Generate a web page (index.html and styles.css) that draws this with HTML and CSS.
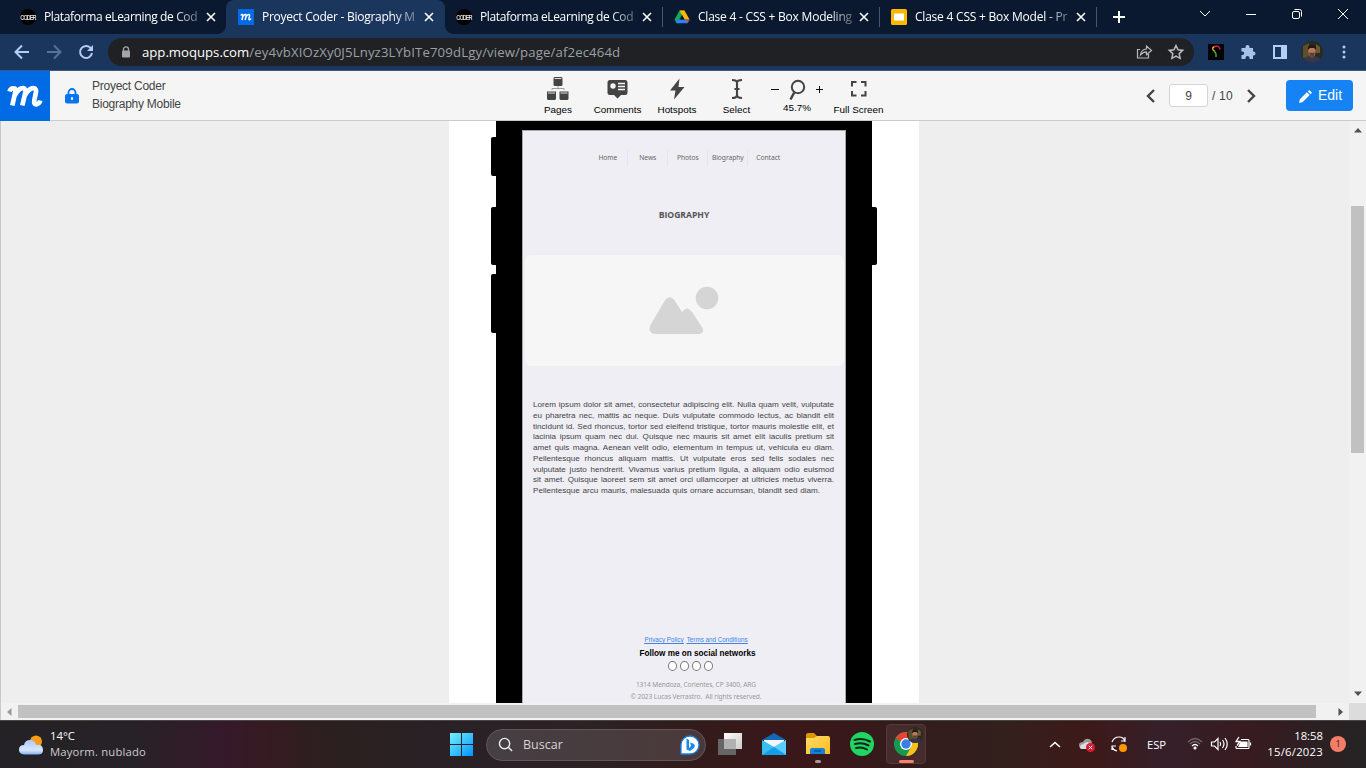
FILE: index.html
```html
<!DOCTYPE html>
<html lang="es">
<head>
<meta charset="utf-8">
<title>Proyect Coder - Biography Mobile</title>
<link rel="stylesheet" href="styles.css">
</head>
<body>
<svg class="defs" width="0" height="0" aria-hidden="true">
  <defs>
    <symbol id="close" viewBox="0 0 10 10"><path d="M1 1l8 8M9 1l-8 8" stroke="#fff" stroke-width="1.6"/></symbol>
    <symbol id="script-m" viewBox="0 0 50 50"><path d="M9.500 20.500Q10.500 16.500 14.500 17.500Q16 18 15.300 21L12.300 34.500M14.500 25Q18.500 17 23 17.200Q26.200 17.500 25.200 22L22.300 34.500M24.500 25Q29 17 33.500 17.200Q36.800 17.500 35.800 22L34.300 29.500Q33.500 34 37 33.200Q39.500 32.500 40.300 29.500" fill="none" stroke="#fff" stroke-width="4.700" stroke-linejoin="round"/></symbol>
    <linearGradient id="sky" x1="0" y1="0" x2="1" y2="1"><stop stop-color="#75f0ff"/><stop offset="1" stop-color="#0095ff"/></linearGradient>
    <linearGradient id="cloud" x1="0" y1="0" x2="0" y2="1"><stop stop-color="#a9ccff"/><stop offset=".7" stop-color="#d8e7ff"/><stop offset="1" stop-color="#7fb1f0"/></linearGradient>
    <linearGradient id="pane" x1="0" y1="0" x2="1" y2="1"><stop stop-color="#fff"/><stop offset="1" stop-color="#ccc"/></linearGradient>
    <linearGradient id="folder" x1="0" y1="0" x2="1" y2="1"><stop stop-color="#ffda68"/><stop offset="1" stop-color="#fcbd20"/></linearGradient>
    <symbol id="portrait" viewBox="0 0 22 22"><circle cx="11" cy="11" r="11" fill="#292b20"/><path d="M2 5L8 2V17H2Z" fill="#5b4d2d"/><path d="M15 3l4 3v6h-4Z" fill="#6c5933"/><path d="M3 18Q7 14 12 16Q17 14 19 18Q16 22 11 22Q6 22 3 18" fill="#34384c"/><path d="M7 8Q11 3 15 8L14 14Q11 19 8 14Z" fill="#b77b5b"/><path d="M7 9Q6 4 11 4Q16 4 15 9L13 7H9Z" fill="#241a15"/><path d="M8 12Q11 11 14 12L13 15Q11 18 9 15Z" fill="#63402f"/></symbol>
  </defs>
</svg>

<header class="tabs">
  <div class="tab tab-1"><span class="coder"><b>CODER</b></span><span class="tab-title">Plataforma eLearning de Cod</span><svg class="x"><use href="#close"/></svg></div>
  <div class="tab tab-2 active"><svg class="fav" viewBox="0 0 50 50"><rect width="50" height="50" fill="#006be5"/><use href="#script-m"/></svg><span class="tab-title biography">Proyect Coder - Biography M</span><svg class="x"><use href="#close"/></svg></div>
  <div class="tab tab-3"><span class="coder"><b>CODER</b></span><span class="tab-title">Plataforma eLearning de Cod</span><svg class="x"><use href="#close"/></svg></div>
  <div class="tab tab-4"><svg class="fav" viewBox="0 0 16 16"><path d="M5.500 1.500h5L5 14 2.500 14.200 0.500 10.500Z" fill="#14a45a"/><path d="M5.500 1.500h5l5 9-5 .3Z" fill="#ffba00"/><path d="M3 10.500h12.500l-2 3.700h-11Z" fill="#2684fc"/><path d="M12 10.500h3.500l-2 3.700Z" fill="#ea4335"/><path d="M8 6l2.700 4.600H5.300Z" fill="#0a1930"/></svg><span class="tab-title drive">Clase 4 - CSS + Box Modeling</span><svg class="x"><use href="#close"/></svg></div>
  <div class="tab tab-5"><svg class="fav" viewBox="0 0 16 16"><rect y="0" width="16" height="16" rx="1.500" fill="#fbb800"/><rect x="3" y="4.500" width="10" height="7" fill="#fff"/></svg><span class="tab-title slides">Clase 4 CSS + Box Model - Pr</span><svg class="x"><use href="#close"/></svg></div>
  <svg class="new-tab" viewBox="0 0 12 12"><path d="M6 0v12M0 6h12" stroke="#fff" stroke-width="2"/></svg>
  <div class="window-buttons">
    <svg viewBox="0 0 12 12"><path d="M1 3l5 5 5-5"/></svg>
    <svg viewBox="0 0 12 12"><path d="M1 6.500h10"/></svg>
    <svg viewBox="0 0 12 12"><rect x="1.500" y="3.500" width="7" height="7" rx="1.500"/><path d="M3.500 1.500h5q2 0 2 2v5"/></svg>
    <svg viewBox="0 0 12 12"><path d="M1 1l10 10M11 1L1 11"/></svg>
  </div>
</header>

<nav class="address-row">
  <svg class="nav-icons" viewBox="0 0 108 36" fill="none" stroke-width="2"><path d="M29 18H16M22 11.500L15.500 18l6.500 6.500" stroke="#b4cdf2"/><path d="M47 18h13M54 11.500l6.500 6.500-6.500 6.500" stroke="#587196"/><path d="M91 14.500A6 6 0 1 0 92 19" stroke="#b4cdf2"/><path d="M93 11v6h-6Z" fill="#b4cdf2"/></svg>
  <div class="address">
    <svg class="tiny-lock" viewBox="0 0 10 12"><path d="M2.500 5V3.300a2.500 2.500 0 0 1 5 0V5" fill="none" stroke="#a2a5a9" stroke-width="1.300"/><rect x="1" y="4.500" width="8" height="7" rx="1" fill="#a2a5a9"/></svg>
    <span class="url"><b>app.moqups.com</b>/ey4vbXIOzXy0J5Lnyz3LYbITe709dLgy/view/page/af2ec464d</span>
    <svg class="address-icons" viewBox="0 0 50 20" fill="none" stroke="#b8babd" stroke-width="1.200"><path d="M4 7.500H1.500V16h11v-4M4.500 13Q5 7.500 10.500 7V4l5 4.500-5 4.300v-3Q7 9.800 4.500 13Z"/><path d="M40 3.500l2 4.300 4.700.6-3.500 3.200.9 4.700L40 14l-4.100 2.300.9-4.700-3.500-3.200 4.700-.6Z" stroke-width="1.500"/></svg>
  </div>
  <div class="extensions">
    <svg viewBox="0 0 16 16"><rect width="16" height="16"/><path d="M7 7.500Q2.500 4.500 6.500 2.500" fill="none" stroke="#f7af22" stroke-width="1.400"/><path d="M6.500 2.500Q11 0.500 12 5.500" fill="none" stroke="#e5186f" stroke-width="1.400"/><path d="M6 7Q8.500 9 8 13" fill="none" stroke="#48b72f" stroke-width="1.400"/></svg>
    <svg viewBox="0 0 16 16"><path d="M2 4h3.500V3a2 2 0 0 1 4 0v1H13v3.500h.5a2 2 0 0 1 0 4H13V15H9.500v-1a2 2 0 0 0-4 0v1H1.500v-4h1a1.700 1.700 0 0 0 0-3.500h-1V4Z" fill="#aac2e7"/></svg>
    <svg viewBox="0 0 16 16"><path d="M2 2h12v12H2Z" fill="none" stroke="#b4cdf2" stroke-width="2"/><path d="M9 2h5v12H9Z" fill="#b4cdf2"/></svg>
    <svg class="avatar"><use href="#portrait"/></svg>
    <svg class="dots" viewBox="0 0 4 14" fill="#b4cdf2"><circle cx="2" cy="2" r="1.500"/><circle cx="2" cy="7" r="1.500"/><circle cx="2" cy="12" r="1.500"/></svg>
  </div>
</nav>

<section class="app-bar">
  <svg class="brand" viewBox="0 0 50 50"><rect width="50" height="50" fill="#006be5"/><use href="#script-m"/></svg>
  <svg class="project-lock" viewBox="0 0 14 16"><path d="M3.500 7V4.500a3.500 3.500 0 0 1 7 0V7" fill="none" stroke="#0875ef" stroke-width="1.800"/><rect y="6" width="14" height="9.500" rx="2" fill="#0875ef"/><rect x="6" y="9" width="2" height="3" rx="1" fill="#fff"/></svg>
  <div class="project"><span>Proyect Coder</span><span>Biography Mobile</span></div>
  <div class="tools">
    <div class="tool w60"><svg viewBox="0 0 24 24" fill="#444"><path d="M7.500 1.500Q7.500 0 8.500 0h7q1 0 1 1.500V7.500q0 1.500-1.500 1.500h-6Q7.500 9 7.500 7.500ZM1 14.500h9v7q0 1.500-1.500 1.500h-6Q1 23 1 21.500ZM13.500 14.500h9v7q0 1.500-1.500 1.500h-6Q13.500 23 13.500 21.500Z"/><path d="M8.500 1.500h7M2 16h7M14.500 16h7" stroke="#ddd"/><path d="M12 9v2.500M6 13v-1.500h12V13" stroke="#888" stroke-width=".8" fill="none"/></svg><span>Pages</span></div>
    <div class="tool w59"><svg viewBox="0 0 24 24"><path d="M4 3h15q2.500 0 2.500 2.500v10Q21.500 18 19 18h-4l-3.500 3.500L8 18H4q-2.500 0-2.500-2.500v-10Q1.500 3 4 3Z" fill="#444"/><circle cx="7" cy="9" r="2.700" fill="#f5f5f5"/><path d="M12 6.500h7M12 9.500h7M12 12.500h7" stroke="#f5f5f5" stroke-width="1.300"/></svg><span>Comments</span></div>
    <div class="tool w60"><svg viewBox="0 0 24 24"><path d="M14.500 1.500L5 13.500h5.500L9 22.500l10.500-12.500h-6Z" fill="#444"/></svg><span>Hotspots</span></div>
    <div class="tool w59"><svg viewBox="0 0 24 24"><path d="M7 3q5 0 5 3q0-3 5-3M12 6v12M7 21q5 0 5-3q0 3 5 3M9.500 12h5" fill="none" stroke="#444" stroke-width="2.100"/></svg><span>Select</span></div>
    <div class="tool zoom-tool"><div class="zoom-icons"><i></i><svg viewBox="0 0 24 24"><circle cx="13" cy="10" r="6.200" fill="none" stroke="#444" stroke-width="2"/><path d="M9.500 15l-4 7.500" stroke="#444" stroke-width="2.500"/></svg><svg class="plus" viewBox="0 0 8 8"><path d="M4.500 1v7M1 4.500h7" stroke="#111"/></svg></div><span>45.7%</span></div>
    <div class="tool w61"><svg viewBox="0 0 24 24"><path d="M9.500 5H5v4.500M14 5h4.500v4.500M5 14v4.500h4.500M14 18.500h4.500V14" fill="none" stroke="#444" stroke-width="2"/></svg><span>Full Screen</span></div>
  </div>
  <div class="pager"><svg viewBox="0 0 10 16"><path d="M8 2L2 8l6 6"/></svg><span class="page-number">9</span><span class="total">/ 10</span><svg viewBox="0 0 10 16"><path d="M2 2l6 6-6 6"/></svg></div>
  <button class="edit"><svg viewBox="0 0 14 14"><path d="M0 14l1-4L8.500 2.500l3 3L4 13ZM9.500 1.500L11 0l3 3-1.500 1.500Z" fill="#fff"/></svg>Edit</button>
</section>

<main class="workspace">
  <div class="canvas">
    <div class="paper">
      <div class="phone">
        <i class="key k1"></i><i class="key k2"></i><i class="key k3"></i><i class="key k4"></i>
        <article class="screen">
          <nav class="site-menu"><span>Home</span><span>News</span><span>Photos</span><span>Biography</span><span>Contact</span></nav>
          <h1>BIOGRAPHY</h1>
          <div class="picture"><svg viewBox="0 0 70 48"><path d="M1.500 38L15 15Q20 6 26 14L33 25Q38 18 43 25L53.500 41Q56 46 50 47H6Q-2 46 1.500 38Z" fill="#d5d5d5"/><circle cx="58" cy="11" r="11.300" fill="#d5d5d5"/></svg></div>
          <p class="bio">
            <span>Lorem ipsum dolor sit amet, consectetur adipiscing elit. Nulla quam velit, vulputate</span>
            <span>eu pharetra nec, mattis ac neque. Duis vulputate commodo lectus, ac blandit elit</span>
            <span>tincidunt id. Sed rhoncus, tortor sed eleifend tristique, tortor mauris molestie elit, et</span>
            <span>lacinia ipsum quam nec dui. Quisque nec mauris sit amet elit iaculis pretium sit</span>
            <span>amet quis magna. Aenean velit odio, elementum in tempus ut, vehicula eu diam.</span>
            <span>Pellentesque rhoncus aliquam mattis. Ut vulputate eros sed felis sodales nec</span>
            <span>vulputate justo hendrerit. Vivamus varius pretium ligula, a aliquam odio euismod</span>
            <span>sit amet. Quisque laoreet sem sit amet orci ullamcorper at ultricies metus viverra.</span>
            <span class="last">Pellentesque arcu mauris, malesuada quis ornare accumsan, blandit sed diam.</span>
          </p>
          <footer>
            <div class="links"><a>Privacy Policy</a><a>Terms and Conditions</a></div>
            <strong>Follow me on social networks</strong>
            <div class="social"><i></i><i></i><i></i><i></i></div>
            <div class="legal first">1314 Mendoza, Corientes, CP 3400, ARG</div>
            <div class="legal">© 2023 Lucas Verrastro.&nbsp; All rights reserved.</div>
          </footer>
        </article>
      </div>
    </div>
  </div>
  <div class="vbar"><svg viewBox="0 0 8 5"><path d="M0 4.500L4 0l4 4.500Z"/></svg><i></i><svg viewBox="0 0 8 5"><path d="M0 .5L4 5 8 .5Z"/></svg></div>
  <div class="hbar"><svg viewBox="0 0 5 8"><path d="M4.500 0L0 4l4.500 4Z" fill="#999"/></svg><i></i><svg viewBox="0 0 5 8"><path d="M.5 0L5 4 .5 8Z"/></svg></div>
  <div class="corner"></div>
</main>

<footer class="taskbar">
  <svg class="weather" viewBox="0 0 24 20"><circle cx="17" cy="6.500" r="6" fill="#f89c19"/><path d="M5 19.500Q0 19 0 14.500 0 10 5 10 6 5 11 5 16 5 17 10q7-1 7 5 0 4.500-5 4.500Z" fill="url(#cloud)"/></svg>
  <div class="forecast"><span>14°C</span><span>Mayorm. nublado</span></div>
  <svg class="start" viewBox="0 0 23 23" fill="url(#sky)"><path d="M0 0H11V11H0ZM12 0H23V11H12ZM0 12H11V23H0ZM12 12H23V23H12Z"/></svg>
  <div class="search"><svg viewBox="0 0 16 16" fill="none" stroke="#eee" stroke-width="1.500"><circle cx="7" cy="7" r="5.500"/><path d="M11 11l4 4"/></svg><span>Buscar</span><svg class="bing" viewBox="0 0 20 20"><path d="M1 19V10a9 9 0 1 1 9 9Z" fill="#fff" stroke="#1684ee" stroke-width="1.300"/><path d="M6.500 3.500v11l3.500 1.500 4-3q2-3-1-4.500l-3-1 1 3.500-2 2V5Z" fill="#198aec"/></svg></div>
  <div class="apps">
    <div><svg viewBox="0 0 24 24"><rect x="6" y="1" width="18" height="16" fill="url(#pane)"/><rect y="7" width="18" height="16" fill="#666"/><path d="M6 7h12v10H6Z" fill="#b2b1b1"/></svg></div>
    <div><svg viewBox="0 0 24 24"><path d="M0 8L12 1l12 7Z" fill="#1467b5"/><path d="M2 8h20v12H2Z" fill="#f3f5f8"/><path d="M0 8l12 7 12-7v15H0Z" fill="#36bdf3"/><path d="M12 15l12-7v15Z" fill="#59ceff"/><path d="M0 23l12-8 12 8Z" fill="#159ee8"/></svg></div>
    <div class="running"><svg viewBox="0 0 24 24"><path d="M0 3q0-2 2-2h6l3 3h11v5H0Z" fill="#dc9700"/><path d="M0 6h8l3-2h11q2 0 2 2v16H0Z" fill="url(#folder)"/><path d="M4 22v-4q0-2 2-2h11q2 0 2 2v4Z" fill="#1682d4"/><path d="M8 18h7v2H8Z" fill="#0762b1"/></svg></div>
    <div><svg viewBox="0 0 24 24"><circle cx="12" cy="12" r="12" fill="#1ed760"/><path d="M4.500 8q8-2.500 15.500 1.500M5 12q7-2 13.500 1.500M6 16q6-1.500 11 1.500" fill="none" stroke="#142219" stroke-width="2" stroke-linecap="round"/></svg></div>
    <div class="chrome"><svg viewBox="0 0 24 24"><circle cx="12" cy="12" r="12" fill="#159a50"/><path d="M1.600 6A12 12 0 0 1 22.400 6L12 12Z" fill="#ea4335"/><path d="M22.400 6H12l5.200 9L12 24A12 12 0 0 0 22.400 6Z" fill="#fbc116"/><circle cx="12" cy="12" r="6" fill="#fff"/><circle cx="12" cy="12" r="4.700" fill="#397ee9"/></svg><svg class="chrome-avatar"><use href="#portrait"/></svg></div>
  </div>
  <svg class="up" viewBox="0 0 12 8"><path d="M1 6l5-4.500L11 6" fill="none" stroke="#fff" stroke-width="1.600"/></svg>
  <svg class="sync-error" viewBox="0 0 16 14"><path d="M3 11Q0 10 0 7t4-3q2-4 6-3 3 1 3 5v5Z" fill="#999"/><path d="M2 11Q0 9 2 7L8 4Q13 5 13 9L8 11Z" fill="#ddd"/><circle cx="11.500" cy="9.500" r="4.500" fill="#d61c33"/><path d="M9.800 7.800l3.400 3.400M13.200 7.800l-3.400 3.400" stroke="#fff"/></svg>
  <svg class="refresh" viewBox="0 0 16 16"><path d="M1 6q2-5 7-5t6 5M10 5h4V1M1 14v-4h4M1 11q1 3 5 4" fill="none" stroke="#fff" stroke-width="1.200"/><circle cx="12" cy="12" r="4" fill="#ff9800"/></svg>
  <span class="lang">ESP</span>
  <svg class="status" viewBox="0 0 64 18" fill="none" stroke="#fff" stroke-width="1.200"><path d="M1 7q7-7 14 0M3 9q5-5 10 0" stroke="#74676b"/><path d="M5 11q3-3 6 0"/><circle cx="8" cy="13" r="1" fill="#fff"/><path d="M24.500 7h3l3.500-3.500v11L27.500 11h-3ZM33 7q1.500 2 0 4M35.500 5q3 4 0 8M38 3q4.500 6 0 12M54 4.500h7q1 0 1 1v7q0 1-1 1H50q-1 0-1-1V11M63.500 7.500v3"/><path d="M54 7h6v4.500h-8Z" fill="#fff"/><path d="M52 2l-3 4.500h4l-3 4" stroke-width="1.300"/></svg>
  <div class="clock"><span>18:58</span><span class="date">15/6/2023</span></div>
  <span class="badge">1</span>
</footer>
</body>
</html>
```
FILE: styles.css
```css
* { box-sizing: border-box; }
body { margin: 0; width: 1366px; height: 768px; overflow: hidden; display: flex; flex-direction: column; font-family: "Liberation Sans", sans-serif; background: #eee; }
svg { display: block; flex: none; overflow: visible; }
.defs { position: absolute; }

.tabs { height: 34px; flex: none; display: flex; align-items: center; background: #0a1930; color: #fff; font: 12px "Open Sans", sans-serif; }
.tab { display: flex; align-items: center; height: 34px; position: relative; }
.tab-1 { width: 226px; padding-left: 20px; }
.tab-2 { width: 219px; padding-left: 12px; }
.tab-3 { width: 218px; padding-left: 11px; border-right: 1px solid #48566c; }
.tab-4 { width: 217px; padding-left: 11px; border-right: 1px solid #48566c; }
.tab-5 { width: 217px; padding-left: 11px; border-right: 1px solid #48566c; }
.tab-3, .tab-4, .tab-5 { height: 20px; }
.active { background: #1b365d; border-radius: 8px 8px 0 0; }
.active::before, .active::after { content: ""; position: absolute; bottom: 0; width: 8px; height: 8px; }
.active::before { left: -8px; background: radial-gradient(circle at 0 0, transparent 7.5px, #1b365d 8px); }
.active::after { right: -8px; background: radial-gradient(circle at 100% 0, transparent 7.5px, #1b365d 8px); }
.fav, .coder { width: 16px; height: 16px; flex: none; }
.coder { background: #000; border-radius: 50%; display: flex; align-items: center; justify-content: center; }
.coder b { font: bold 5.5px "Liberation Sans", sans-serif; letter-spacing: -0.9px; transform: scaleY(1.4); color: #ddd; }
.tab-title { width: 155px; margin-left: 8px; margin-right: -1px; white-space: nowrap; line-height: 18px; letter-spacing: -0.36px; -webkit-mask-image: linear-gradient(90deg, #000 84%, rgba(0,0,0,.3) 100%); mask-image: linear-gradient(90deg, #000 84%, rgba(0,0,0,.3) 100%); }
.biography { letter-spacing: -0.26px; }
.drive { letter-spacing: -0.22px; }
.slides { letter-spacing: -0.22px; }
.x { width: 10px; height: 10px; margin-left: 8px; }
.tab-4 .x, .tab-5 .x { margin-left: 7px; }
.new-tab { width: 12px; height: 12px; margin-left: 16px; }
.window-buttons { display: flex; gap: 34px; margin: -6px 17px 0 auto; }
.window-buttons svg { width: 12px; height: 12px; fill: none; stroke: #fff; stroke-width: 1; }

.address-row { height: 37px; flex: none; background: #1b365d; border-bottom: 1px solid #405880; display: flex; align-items: center; }
.nav-icons { width: 108px; height: 36px; }
.address { height: 28px; width: 1086px; border-radius: 14px; background: #202124; display: flex; align-items: center; padding: 0 11px 0 13px; }
.tiny-lock { width: 10px; height: 12px; }
.url { font: 13.2px/20px "Open Sans", sans-serif; color: #9aa0a6; margin-left: 11px; letter-spacing: 0.12px; white-space: nowrap; }
.url b { font-weight: 400; color: #fff; letter-spacing: -0.02px; }
.address-icons { width: 50px; height: 20px; margin-left: auto; margin-right: -3px; }
.extensions { margin-left: 14px; display: flex; align-items: center; gap: 16px; }
.extensions svg { width: 16px; height: 16px; }
.extensions .avatar { width: 22px; height: 22px; margin-left: -3px; }
.extensions .dots { width: 4px; height: 14px; margin-left: 3px; }

.app-bar { height: 50px; flex: none; background: #f5f5f5; border-bottom: 1px solid #ccc; display: flex; align-items: flex-start; position: relative; z-index: 2; }
.brand { width: 50px; height: 50px; }
.project-lock { width: 14px; height: 16px; margin: 17px 0 0 15px; }
.project { margin: 6px 0 0 13px; width: 436px; display: flex; flex-direction: column; font-size: 12px; line-height: 18px; color: #444; letter-spacing: -0.25px; }
.tools { display: flex; }
.tool { display: flex; flex-direction: column; align-items: center; height: 49px; padding-top: 6px; font-size: 9.9px; line-height: 11px; color: #000; white-space: nowrap; }
.tool svg { width: 24px; height: 24px; }
.tool > span { margin-top: 3px; }
.w60 { width: 60px; } .w59 { width: 59px; } .w61 { width: 61px; }
.zoom-tool { width: 62px; }
.zoom-tool > span { margin-top: 1px; }
.zoom-icons { display: flex; align-items: center; gap: 6px; }
.zoom-icons i { width: 8px; height: 1px; background: #111; }
.tool .plus { width: 8px; height: 8px; }
.pager { display: flex; align-items: center; margin: 13px 0 0 257px; height: 23px; color: #444; font-size: 12px; }
.pager svg { width: 10px; height: 16px; fill: none; stroke: #444; stroke-width: 2.4; }
.page-number { width: 39px; height: 23px; border: 1px solid #d5d5d5; border-radius: 3px; background: #fff; text-align: center; line-height: 22px; margin-left: 13px; }
.total { width: 38px; padding-left: 4px; white-space: nowrap; letter-spacing: 0.2px; }
.edit { border: 0; margin: 9px 13px 0 auto; width: 67px; height: 31px; border-radius: 4px; background: #1683f5; color: #fff; font: 14px "Liberation Sans", sans-serif; display: flex; align-items: center; padding: 0 0 1px 13px; gap: 6px; }
.edit svg { width: 13px; height: 13px; margin-top: 2px; }

.workspace { height: 599px; flex: none; display: grid; grid-template: 582px 17px / 1349px 17px; }
.canvas { overflow: hidden; background: #eee; border-left: 1px solid #c8c8c8; }
.paper { width: 469.5px; height: 582px; margin-left: 448px; background: #fff; padding-left: 47px; }
.phone { width: 376px; height: 582px; background: #000; padding: 9px 26px 0; position: relative; }
.key { position: absolute; width: 6px; background: #000; left: -5px; border-radius: 2px 0 0 2px; }
.k1 { top: 16px; height: 39px; }
.k2 { top: 86px; height: 58px; }
.k3 { top: 153px; height: 59px; }
.k4 { top: 86px; height: 58px; left: 375px; border-radius: 0 2px 2px 0; }
.screen { width: 324px; height: 573px; background: #efeef4; border: 1px solid #aaa; border-bottom: 0; display: flex; flex-direction: column; font-family: "Noto Sans", sans-serif; color: #555; }
.site-menu { display: grid; grid-template-columns: repeat(5, 40px); margin: 19px 0 0 65.3px; height: 16px; font-size: 6.7px; line-height: 15px; text-align: center; color: #666; letter-spacing: -0.05px; }
.site-menu span { border-right: 1px solid #e5e5e9; }
.site-menu span:last-child { border: 0; }
h1 { margin: 41px 0 0; font: bold 8.6px/16px "Open Sans", sans-serif; text-align: center; color: #555; }
.picture { height: 111px; margin: 32px 1px 0 2px; background: #f6f6f6; border-radius: 6px; display: flex; justify-content: center; padding: 32px 1px 0 0; }
.picture svg { width: 70px; height: 48px; }
.bio { margin: 34.5px 0 0 10px; width: 301px; font: 8.1px/10.67px "Liberation Sans", sans-serif; color: #444; }
.bio span { display: block; white-space: nowrap; text-align-last: justify; }
.bio .last { width: 287px; }
footer { font-family: "Open Sans", sans-serif; }
.screen footer { margin-top: 139.5px; display: flex; flex-direction: column; align-items: center; margin-left: 24px; }
.links { display: flex; gap: 3px; font: 6.3px/8px "Liberation Sans", sans-serif; color: #3e83e5; text-decoration: underline; }
.links a { text-decoration: underline; }
.screen strong { font: bold 8.2px/10px "Liberation Sans", sans-serif; color: #000; margin-top: 5px; white-space: nowrap; margin-left: 3px; }
.social { display: flex; gap: 3px; margin: 2px 11px 0 0; }
.social i { width: 9px; height: 10px; border: 1px solid #777; border-radius: 50%; background: #fff; }
.legal { font: 6.6px/12px "Noto Sans", sans-serif; letter-spacing: -0.09px; color: #999; white-space: nowrap; }
.first { margin-top: 8px; }
.vbar { background: #f1f1f1; display: flex; flex-direction: column; align-items: center; padding-top: 7px; }
.vbar svg { width: 8px; height: 5px; fill: #505050; }
.vbar i { width: 13px; height: 247px; margin: 73px 0 238px; background: #c1c1c1; flex: none; }
.hbar { background: #f1f1f1; border-left: 1px solid #c8c8c8; display: flex; align-items: center; padding-left: 6px; }
.hbar svg { width: 5px; height: 8px; fill: #505050; }
.hbar i { width: 1298px; height: 13px; margin: 0 22px 0 6px; background: #c1c1c1; }
.corner { background: #dcdcdc; }

.taskbar { height: 48px; flex: none; display: flex; align-items: center; border-top: 1px solid #484444; color: #fff; background: linear-gradient(90deg, #232225 0, #272227 130px, #35192a 225px, #351b21 270px, #2a201f 340px, #292126 440px, #2b2225 590px, #321b1b 690px, #3b1719 800px, #331b1c 900px, #32201d 1000px, #3d1919 1090px, #35202a 1160px, #371b20 1250px, #252324 1360px); }
.weather { width: 24px; height: 20px; margin-left: 19px; }
.forecast { margin: -2px 0 0 7px; width: 400px; display: flex; flex-direction: column; font-size: 11.3px; line-height: 16px; }
.forecast span:last-child { color: #ccc; letter-spacing: 0.17px; }
.start { width: 23px; height: 23px; }
.search { width: 220px; height: 32px; margin-left: 13px; border: 1px solid #625558; border-radius: 16px; background: linear-gradient(90deg, #453f43, #4b393a); display: flex; align-items: center; padding: 0 5px 0 11px; font-size: 12.5px; color: #d7d2d3; }
.search > svg { width: 15px; height: 15px; }
.search span { margin: -1px 0 0 10px; }
.search .bing { width: 20px; height: 20px; margin-left: auto; }
.apps { display: flex; gap: 4px; margin-left: 4px; margin-top: -1px; }
.apps > div { width: 40px; height: 40px; display: flex; align-items: center; justify-content: center; position: relative; border-radius: 4px; }
.apps svg { width: 24px; height: 24px; }
.running::after, .chrome::after { content: ""; position: absolute; bottom: 1px; width: 6px; height: 3px; border-radius: 2px; background: #a49b9c; }
.chrome { background: #452b2b; border: 1px solid #533b3b; }
.chrome::after { width: 15px; background: #ff806d; bottom: 0; }
.apps .chrome-avatar { position: absolute; width: 16px; height: 16px; left: 20px; top: 2px; }
.up { width: 12px; height: 8px; margin-left: 123px; }
.sync-error { width: 16px; height: 14px; margin-left: 18px; }
.refresh { width: 16px; height: 16px; margin-left: 16px; margin-top: -1px; }
.lang { font-size: 11.3px; letter-spacing: -0.1px; width: 20px; margin-left: 20px; }
.status { width: 64px; height: 18px; margin-left: 20px; margin-top: -2px; }
.clock { width: 70px; margin: -2px 0 0 2px; display: flex; flex-direction: column; align-items: flex-end; font-size: 11.3px; line-height: 16px; white-space: nowrap; }
.date { letter-spacing: 0.25px; }
.badge { width: 16px; height: 16px; border-radius: 50%; background: #f57c67; margin-left: 7px; color: #312022; text-align: center; font-size: 9px; line-height: 16px; margin-top: -1px; }
```
